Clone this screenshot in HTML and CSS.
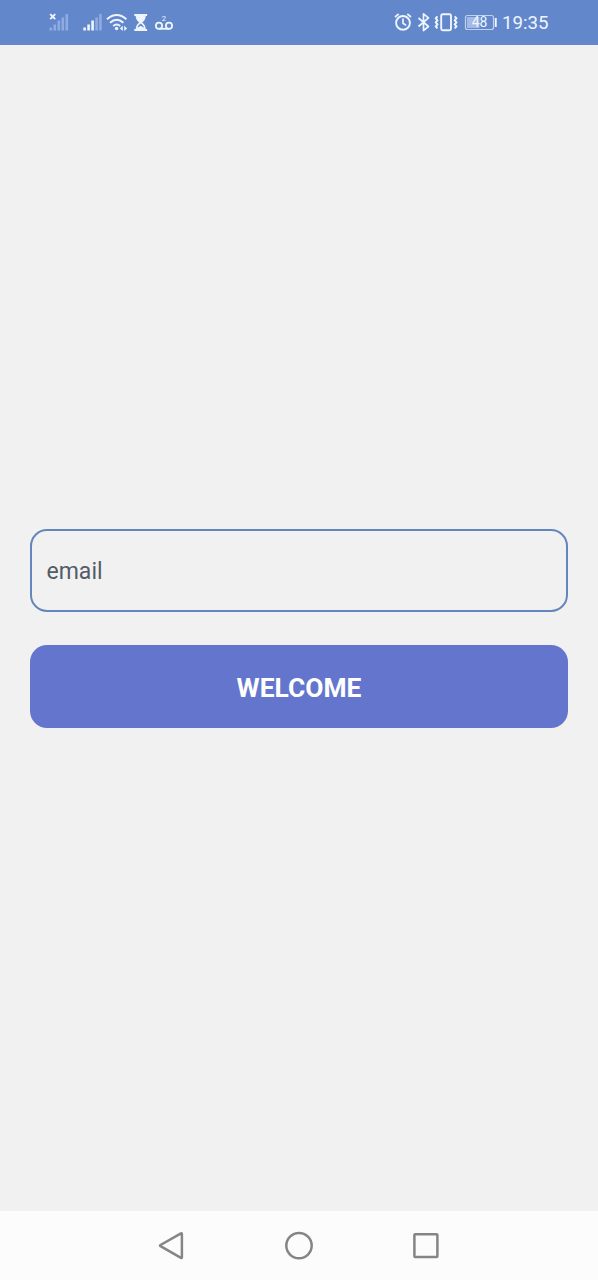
FILE: index.html
```html
<!DOCTYPE html>
<html lang="en">
<head>
<meta charset="utf-8">
<title>Welcome</title>
<link rel="stylesheet" href="styles.css">
</head>
<body>
<div class="screen">
  <header class="status">
    <div class="status-left">
      <svg class="signal" width="22" height="20" viewBox="48 12 22 20">
        <path class="dim" d="M49.5 27.5h2.6v3h-2.6zM53.5 24.5h2.6v6h-2.6zM57.5 20.5h2.6v10h-2.6zM61.5 17.5h2.6v13h-2.6zM65.5 14h2.6v16.5h-2.6z"/>
        <path class="line" stroke-width="1.9" d="M50.2 14.2l5 5M55.2 14.2l-5 5"/>
      </svg>
      <svg class="signal-two" width="22" height="20" viewBox="82 12 22 20">
        <path class="solid" d="M83.3 27.5h2.6v3h-2.6zM87.3 24.5h2.6v6h-2.6zM91.3 20.5h2.6v10h-2.6z"/>
        <path class="dim" d="M95.3 17.5h2.6v13h-2.6zM99.1 14h2.6v16.5h-2.6z"/>
      </svg>
      <svg class="wifi" width="24" height="20" viewBox="105 12 24 20">
        <path class="line" stroke-width="2" d="M107 19.2Q116.7 10.8 126.4 19.2M110 22.7Q116.7 16.8 123.4 22.7M113.2 26Q116.7 23 120.2 26"/>
        <circle class="solid" cx="116.6" cy="28.5" r="1.7"/>
        <path class="solid" d="M122.8 25.8v5.2l-2.9-2.6zM124.2 25.8v5.2l2.9-2.6z"/>
      </svg>
      <svg class="hourglass" width="16" height="20" viewBox="133 12 16 20">
        <path class="solid" d="M134.3 14h12.8v2h-1.4c0 3-1.5 4.800-3.500 6.500 2 1.700 3.500 3.500 3.500 6.500h1.400v2h-12.800v-2h1.400c0-3 1.500-4.800 3.500-6.500-2-1.700-3.500-3.500-3.500-6.500h-1.400z"/>
        <path class="cutout" d="M140.7 23.500c1.900 1.500 2.900 2.400 3.200 4.300l-3.200-2-3.200 2c.3-1.900 1.300-2.800 3.200-4.300z"/>
      </svg>
      <svg class="voicemail" width="20" height="20" viewBox="154 12 20 20">
        <circle class="line" stroke-width="1.8" cx="159" cy="25.700" r="3.100"/>
        <circle class="line" stroke-width="1.8" cx="169" cy="25.700" r="3.100"/>
        <path class="line" stroke-width="1.8" d="M159 28.800h10"/>
        <text class="slot" x="161.800" y="20.800">2</text>
      </svg>
    </div>
    <div class="status-right">
      <svg width="20" height="20" viewBox="393 12 20 20">
        <circle class="line" stroke-width="1.9" cx="403" cy="22.9" r="6.9"/>
        <path class="line" stroke-width="1.7" d="M403 18.500v4.700l3.200 2.200M395 17l3.700-3M411 17l-3.700-3"/>
      </svg>
      <svg class="bluetooth" width="14" height="20" viewBox="417 12 14 20">
        <path class="line" stroke-width="1.7" d="M418.500 18l10 8.500-5 4V13.800l5 4-10 8.700"/>
      </svg>
      <svg class="vibrate" width="24" height="20" viewBox="434 12 24 20">
        <rect class="line" stroke-width="1.9" x="441.200" y="14.200" width="9.800" height="16" rx="1.500"/>
        <path class="line" stroke-width="2" d="M437.500 16.300l-1.800 2 1.800 2-1.800 2 1.800 2-1.800 2 1.800 2M454.700 16.300l1.800 2-1.800 2 1.800 2-1.800 2 1.800 2-1.800 2"/>
      </svg>
      <svg class="battery" width="34" height="20" viewBox="464 12 34 20">
        <rect class="shell" x="465.500" y="15.500" width="28" height="14" rx="2"/>
        <rect class="charge" x="467" y="17" width="12.500" height="11"/>
        <path class="solid" d="M494.800 18h1.900v9h-1.900z"/>
        <text class="level" x="479.500" y="27.400" text-anchor="middle">48</text>
      </svg>
      <span class="clock">19:35</span>
    </div>
  </header>
  <main class="content">
    <form class="form">
      <input class="field" type="text" placeholder="email" aria-label="email">
      <button class="submit" type="button">WELCOME</button>
    </form>
  </main>
  <nav class="navbar">
    <svg width="30" height="32" viewBox="156 1230 30 32"><path class="key" d="M181 1233.300q.9-.4.900.6v23.400q0 1-.9.500l-20.500-11.600q-1-.6 0-1.200z"/></svg>
    <svg width="30" height="32" viewBox="284 1230 30 32"><circle class="key" cx="299" cy="1245.600" r="12.700"/></svg>
    <svg width="30" height="32" viewBox="411 1230 30 32"><rect class="key" x="414.400" y="1234.300" width="23" height="22.700" rx=".8"/></svg>
  </nav>
</div>
</body>
</html>
```
FILE: styles.css
```css
* { box-sizing: border-box; }
body { margin: 0; font-family: Roboto, sans-serif; }
svg { display: block; flex: none; }

.screen {
  display: flex;
  flex-direction: column;
  height: 1280px;
  background: #f1f1f1;
}

.status {
  display: flex;
  justify-content: space-between;
  height: 45px;
  padding: 12px 49px 0 48px;
  background: #6387cb;
  color: #eef5ff;
}
.status-left, .status-right { display: flex; align-items: flex-start; }
.signal-two { margin-left: 12px; }
.wifi { margin-left: 1px; }
.hourglass { margin-left: 4px; }
.voicemail { margin-left: 5px; }
.bluetooth { margin-left: 4px; }
.vibrate { margin-left: 3px; }
.battery { margin-left: 6px; }
.clock {
  width: 47px;
  margin-left: 4px;
  font-size: 18.7px;
  line-height: 23px;
  white-space: nowrap;
}

.solid { fill: #eef5ff; }
.dim { fill: #8fabe2; }
.cutout { fill: #6387cb; }
.line { fill: none; stroke: #eef5ff; stroke-linejoin: round; }
.slot { fill: #eef5ff; font-size: 7.5px; }
.shell { fill: none; stroke: #c0d0f1; stroke-width: 1.2; }
.charge { fill: #a5b9e6; }
.level { fill: #eef5ff; font-size: 14px; }

.content {
  flex: 1;
  padding: 484px 30px 0;
}
.form { display: flex; flex-direction: column; gap: 33px; }
.field, .submit {
  width: 100%;
  height: 83px;
  margin: 0;
  border-radius: 17px;
  font-family: inherit;
}
.field {
  padding: 2px 15px 0 14.5px;
  border: 2px solid #6486bd;
  background: transparent;
  color: #535c68;
  font-size: 23px;
}
.field::placeholder { color: #535c68; opacity: 1; }
.submit {
  padding: 3px 0 0;
  border: 0;
  background: #6475cd;
  color: #fff;
  font-size: 26.4px;
  font-weight: 700;
}

.navbar {
  display: flex;
  align-items: flex-start;
  justify-content: space-between;
  height: 69px;
  padding: 19px 157px 0 156px;
  background: #fcfcfc;
}
.key { fill: none; stroke: #858585; stroke-width: 2.5; stroke-linejoin: round; }
```
